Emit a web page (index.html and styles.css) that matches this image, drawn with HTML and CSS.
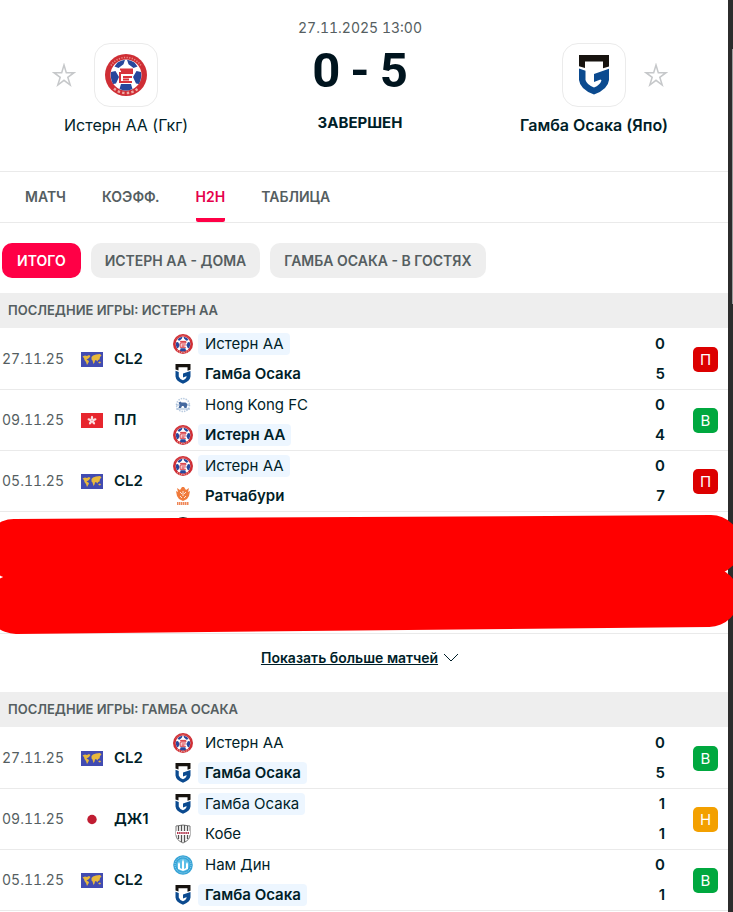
FILE: index.html
```html
<!DOCTYPE html>
<html lang="ru">
<head>
<meta charset="utf-8">
<meta name="viewport" content="width=device-width, initial-scale=1">
<title>Истерн АА - Гамба Осака</title>
<link rel="stylesheet" href="styles.css">
</head>
<body>
<svg class="sprite" aria-hidden="true">
  <symbol id="eastern" viewBox="0 0 42 42">
    <circle cx="21" cy="21" r="21" fill="#cf2e35"/>
    <path fill="none" stroke="#f3b9ae" stroke-width="1.600" stroke-dasharray="1.200 1.400" opacity=".7" d="M6 11.500A18 18 0 0 1 36 11.500"/>
    <path fill="none" stroke="#f6c9c0" stroke-width="2.400" stroke-dasharray="2.400 2.200" opacity=".8" d="M9 34.500A18 18 0 0 0 33 34.500"/>
    <circle cx="21" cy="21" r="15.500" fill="#fff"/>
    <path fill="#27479c" d="M12.500 8.600Q16 6.200 20 5.700l-1.500 4.500-5 3.800-4-1.500zM29.500 8.600Q26 6.200 22 5.700l1.500 4.500 5 3.800 4-1.500zM6 18l4.500-1 3.500 6-3 6.500-3 .5Q5 24 6 18zM36 18l-4.500-1-3.500 6 3 6.500 3 .5Q37 24 36 18zM16 30h10l1.500 5q-6.500 3-13 0z"/>
    <path fill="none" stroke="#d8343c" stroke-width="2" d="M15 15.500h12v3.500H15v9h12M18 23h9M18 25.500h6M16 17h10"/>
  </symbol>
  <symbol id="gamba" viewBox="0 0 30 40">
    <path fill="#17130f" d="M0 0h30v11.500l-6 1.800V6.500H6V13L0 11.200z"/>
    <path fill="#0b4a8f" d="M0 13.500l6.500 2.300V25q1.500 5 8.500 7.500 6-2.500 7.500-7l-1-1-6.500 2.500v-8L30 13.800V25q-1 9.500-15 14.500Q1 34.500 0 25z"/>
  </symbol>
  <symbol id="hkfc" viewBox="0 0 20 20">
    <circle cx="10" cy="10" r="6.500" fill="none" stroke="#b9cbe0" stroke-width="1.500" stroke-dasharray="1.500 1"/>
    <path fill="#46699f" d="M5.500 7.500l2-1 1 1h4l2 1.500-1 4h-2l-1-2H9l-1 2H5.500l1-3z"/>
    <path stroke="#9db6d3" d="M3 14h14M3 10h3M14 10h3"/>
  </symbol>
  <symbol id="ratchaburi" viewBox="0 0 20 20">
    <path fill="#f07b3c" d="M4 2l3 2 2-3h2l2 3 3-2-1 4 2-1-1 5-2 3-4 2-4-2-2-3-1-5 2 1z"/>
    <path fill="none" stroke="#fff" stroke-width=".800" d="M7 6l2 2M13 6l-2 2M10 5v5M7 10l2 2M13 10l-2 2"/>
    <path stroke="#ef8757" stroke-width="3" stroke-dasharray="1.500 .5" d="M4 17.500h12"/>
  </symbol>
  <symbol id="kobe" viewBox="0 0 20 20">
    <path fill="#fff" stroke="#777" d="M3 2q7-2 14 0v9q0 5-7 8-7-3-7-8z"/>
    <path stroke="#555" stroke-width="1.300" d="M5.500 2v13M8.500 1v17M11.500 1v17M14.500 2v13"/>
    <path fill="#fff" d="M3 7h14v4H3z"/>
    <path stroke="#b43b52" stroke-width="2" stroke-dasharray="1.500 .6" d="M4 9h12"/>
  </symbol>
  <symbol id="namdinh" viewBox="0 0 20 20">
    <circle cx="10" cy="10" r="9.800" fill="#35a3d6"/>
    <circle cx="10" cy="10" r="8" fill="none" stroke="#a8dbf1" stroke-dasharray="1 1"/>
    <circle cx="10" cy="10" r="6.500" fill="#5cbfe8"/>
    <path fill="#fff" d="M5 14V9l1-2 1 2v4l2 1V7l1-3 1 3v7l2-1V9l1-2 1 2v5l-5 2z"/>
  </symbol>
  <symbol id="blackcrest" viewBox="0 0 20 20"><circle cx="10" cy="10" r="10" fill="#222"/></symbol>
  <symbol id="world" viewBox="0 0 22 15">
    <path fill="#414bb2" d="M0 0h22v15H0z"/>
    <path fill="#e8b93c" d="M1.500 4.500L4 3.500l2 .5 2-1 1.500 1L8 6 6.500 7l-1 .5L8 9l-.5 1.500L6 13l-1-3-1.500-2L3 6zM10.500 5L12 3.500 15 2.500l4-.5 1.500 1.500-1.500 1.500-.5 2.500L17 8l-.5 1.500L15 8l-1 .5-.5 2-1 1.500-1-3.500-1-1zM17.500 10l1.500-.5 1 1-1 1-1.500-.5z"/>
  </symbol>
  <symbol id="hongkong" viewBox="0 0 22 15">
    <path fill="#e7262e" d="M0 0h22v15H0z"/>
    <g fill="#fff" opacity=".85">
      <ellipse cx="11" cy="5" rx="1.200" ry="2.200"/>
      <ellipse cx="11" cy="5" rx="1.200" ry="2.200" transform="rotate(72 11 7.500)"/>
      <ellipse cx="11" cy="5" rx="1.200" ry="2.200" transform="rotate(144 11 7.500)"/>
      <ellipse cx="11" cy="5" rx="1.200" ry="2.200" transform="rotate(216 11 7.500)"/>
      <ellipse cx="11" cy="5" rx="1.200" ry="2.200" transform="rotate(288 11 7.500)"/>
    </g>
  </symbol>
  <symbol id="japan" viewBox="0 0 22 15">
    <path fill="#fff" d="M0 0h22v15H0z"/>
    <circle cx="11" cy="7.500" r="4.700" fill="#c01d32"/>
  </symbol>
  <symbol id="star" viewBox="0 0 24 24">
    <path fill="none" stroke="#c6c8ca" stroke-width="1.500" d="M12 2l2.300 7.700h7.700l-6.200 4.600 2.400 7.700-6.200-4.700-6.200 4.700 2.400-7.700L2 9.700h7.700z"/>
  </symbol>
</svg>

<div class="window">
<main class="page">
  <header class="match">
    <div class="side">
      <div class="side-top">
        <button class="star" aria-label="В избранное"><svg><use href="#star"/></svg></button>
        <div class="logo"><svg class="logo-round"><use href="#eastern"/></svg></div>
      </div>
      <a class="side-name" href="#">Истерн АА (Гкг)</a>
    </div>
    <div class="summary">
      <time class="start">27.11.2025 13:00</time>
      <div class="result"><span>0</span><span>-</span><span>5</span></div>
      <div class="status">ЗАВЕРШЕН</div>
    </div>
    <div class="side">
      <div class="side-top">
        <div class="logo logo-away"><svg class="logo-shield"><use href="#gamba"/></svg></div>
        <button class="star star-away" aria-label="В избранное"><svg><use href="#star"/></svg></button>
      </div>
      <a class="side-name winner" href="#">Гамба Осака (Япо)</a>
    </div>
  </header>

  <nav class="tabs">
    <a href="#">МАТЧ</a>
    <a href="#">КОЭФФ.</a>
    <a href="#" class="current">H2H</a>
    <a href="#">ТАБЛИЦА</a>
  </nav>

  <div class="filters">
    <button class="chip chip-on">ИТОГО</button>
    <button class="chip">ИСТЕРН АА - ДОМА</button>
    <button class="chip">ГАМБА ОСАКА - В ГОСТЯХ</button>
  </div>

  <section>
    <h2 class="section-title">ПОСЛЕДНИЕ ИГРЫ: ИСТЕРН АА</h2>
    <table class="games">
      <tr>
        <td class="date">27.11.25</td>
        <td class="flag"><svg><use href="#world"/></svg></td>
        <td class="league">CL2</td>
        <td class="teams">
          <div class="team"><svg><use href="#eastern"/></svg><span class="own">Истерн АА</span></div>
          <div class="team"><svg><use href="#gamba"/></svg><span class="won">Гамба Осака</span></div>
        </td>
        <td class="goals"><div>0</div><div>5</div></td>
        <td class="outcome"><span class="badge loss">П</span></td>
      </tr>
      <tr>
        <td class="date">09.11.25</td>
        <td class="flag"><svg><use href="#hongkong"/></svg></td>
        <td class="league">ПЛ</td>
        <td class="teams">
          <div class="team"><svg><use href="#hkfc"/></svg><span>Hong Kong FC</span></div>
          <div class="team"><svg><use href="#eastern"/></svg><span class="own won">Истерн АА</span></div>
        </td>
        <td class="goals"><div>0</div><div>4</div></td>
        <td class="outcome"><span class="badge win">В</span></td>
      </tr>
      <tr>
        <td class="date">05.11.25</td>
        <td class="flag"><svg><use href="#world"/></svg></td>
        <td class="league">CL2</td>
        <td class="teams">
          <div class="team"><svg><use href="#eastern"/></svg><span class="own">Истерн АА</span></div>
          <div class="team"><svg><use href="#ratchaburi"/></svg><span class="won">Ратчабури</span></div>
        </td>
        <td class="goals"><div>0</div><div>7</div></td>
        <td class="outcome"><span class="badge loss">П</span></td>
      </tr>
    </table>
    <div class="covered">
      <div class="covered-row"><svg><use href="#blackcrest"/></svg></div>
      <div class="covered-row"></div>
      <svg class="marker" viewBox="0 0 733 122" preserveAspectRatio="none" aria-hidden="true">
        <path d="M14 37L711 33M16 92L709 85"/>
      </svg>
    </div>
    <div class="more">
      <a href="#">Показать больше матчей</a>
      <svg viewBox="0 0 16 10"><path d="M1 1l7 7 7-7"/></svg>
    </div>
  </section>

  <section>
    <h2 class="section-title">ПОСЛЕДНИЕ ИГРЫ: ГАМБА ОСАКА</h2>
    <table class="games">
      <tr>
        <td class="date">27.11.25</td>
        <td class="flag"><svg><use href="#world"/></svg></td>
        <td class="league">CL2</td>
        <td class="teams">
          <div class="team"><svg><use href="#eastern"/></svg><span>Истерн АА</span></div>
          <div class="team"><svg><use href="#gamba"/></svg><span class="own won">Гамба Осака</span></div>
        </td>
        <td class="goals"><div>0</div><div>5</div></td>
        <td class="outcome"><span class="badge win">В</span></td>
      </tr>
      <tr>
        <td class="date">09.11.25</td>
        <td class="flag"><svg><use href="#japan"/></svg></td>
        <td class="league">ДЖ1</td>
        <td class="teams">
          <div class="team"><svg><use href="#gamba"/></svg><span class="own">Гамба Осака</span></div>
          <div class="team"><svg><use href="#kobe"/></svg><span>Кобе</span></div>
        </td>
        <td class="goals"><div>1</div><div>1</div></td>
        <td class="outcome"><span class="badge draw">Н</span></td>
      </tr>
      <tr>
        <td class="date">05.11.25</td>
        <td class="flag"><svg><use href="#world"/></svg></td>
        <td class="league">CL2</td>
        <td class="teams">
          <div class="team"><svg><use href="#namdinh"/></svg><span>Нам Дин</span></div>
          <div class="team"><svg><use href="#gamba"/></svg><span class="own won">Гамба Осака</span></div>
        </td>
        <td class="goals"><div>0</div><div>1</div></td>
        <td class="outcome"><span class="badge win">В</span></td>
      </tr>
    </table>
  </section>
</main>
<div class="scroll-track"><div class="scroll-thumb"></div></div>
</div>
</body>
</html>
```
FILE: styles.css
```css
* { box-sizing: border-box; }

body {
  margin: 0;
  background: #fff;
  color: #001e28;
  font: 15px/20px Inter, "Liberation Sans", sans-serif;
}

a { color: inherit; text-decoration: none; }
button { border: 0; padding: 0; background: none; font: inherit; color: inherit; }
svg { display: block; }
.sprite { position: absolute; width: 0; height: 0; }

.window {
  display: grid;
  grid-template-columns: minmax(0, 1fr) 5px;
  min-height: 100vh;
  overflow: hidden;
}

.scroll-track { background: #2c2c2c; padding: 49px 0 0 4px; }
.scroll-thumb { height: 255px; background: #9a9a9a; }

/* Match header */
.match {
  display: grid;
  grid-template-columns: 35fr 30fr 35fr;
  padding: 18px 8px 36px 0;
  border-bottom: 1px solid #eaeaea;
}

.side { display: flex; flex-direction: column; align-items: center; padding-top: 25px; }
.side-top {
  display: grid;
  grid-template-columns: 24px 64px 24px;
  gap: 18px;
  align-items: center;
}
.star svg { width: 24px; height: 24px; }
.logo {
  display: grid;
  place-items: center;
  height: 64px;
  border: 1px solid #ebebeb;
  border-radius: 16px;
}
.logo-away { grid-column: 2; }
.logo-round { width: 42px; height: 42px; }
.logo-shield { width: 30px; height: 40px; }
.side-name { margin-top: 8px; font-size: 16px; }
.winner { font-weight: 600; }

.summary { display: flex; flex-direction: column; align-items: center; }
.start { color: #555e61; font-size: 14px; font-variant-numeric: tabular-nums; }
.result {
  display: flex;
  gap: 10px;
  margin-top: 8px;
  color: #00141e;
  font: 700 49px/50px Roboto, Inter, sans-serif;
}
.status { margin-top: 17px; font-weight: 700; }

/* Tabs */
.tabs {
  display: flex;
  gap: 36px;
  padding: 0 25px;
  border-bottom: 1px solid #eaeaea;
  color: #555e61;
  font-size: 14px;
  font-weight: 600;
}
.tabs a { height: 50px; line-height: 50px; }
.tabs .current {
  color: #e5004b;
  background: linear-gradient(#ff0046, #ff0046) bottom / 100% 4px no-repeat;
  border-radius: 2px;
}

.filters { display: flex; gap: 10px; padding: 20px 2px 15px; }
.chip {
  height: 35px;
  padding: 0 14px;
  border-radius: 10px;
  background: #eee;
  color: #555e61;
  font-size: 14px;
  font-weight: 600;
}
.chip-on { padding: 0 15px; background: #ff0046; color: #fff; }

/* Game lists */
.section-title {
  margin: 0 0 1px;
  padding: 0 8px;
  background: #eee;
  color: #555e61;
  font-size: 13px;
  font-weight: 600;
  line-height: 35px;
}

.games { width: 100%; table-layout: fixed; border-collapse: separate; border-spacing: 0; }
.games td { padding: 0; border-bottom: 1px solid #eaeaea; vertical-align: middle; }
.games .date {
  width: 81px;
  padding-left: 2px;
  color: #555e61;
  font-size: 14px;
  font-variant-numeric: tabular-nums;
}
.games .flag { width: 33px; }
.flag svg { width: 22px; height: 15px; }
.games .league { width: 59px; font-weight: 600; }
.games .goals { width: 40px; font-weight: 600; text-align: right; line-height: 30px; }
.games .outcome { width: 63px; padding: 0 10px 0 28px; }

.team { display: flex; align-items: center; gap: 5px; height: 30px; }
.team svg { width: 20px; height: 20px; }
.team span { padding: 0 6px 0 7px; border-radius: 4px; line-height: 22px; }
.team .own { background: #edf6ff; }
.team .won { font-weight: 600; }

.badge {
  display: block;
  height: 25px;
  border-radius: 5px;
  color: #fff;
  line-height: 25px;
  text-align: center;
}
.loss { background: #dc0000; }
.win { background: #00a83f; }
.draw { background: #f3a000; }

/* Games crossed out with a marker */
.covered { position: relative; }
.covered-row { height: 61px; padding: 5px 173px; border-bottom: 1px solid #eaeaea; }
.covered-row svg { width: 20px; height: 20px; }
.marker { position: absolute; top: 0; left: 0; width: calc(100% + 5px); height: 122px; }
.marker path { fill: none; stroke: #f00; stroke-width: 60px; stroke-linecap: round; }

.more {
  display: flex;
  align-items: center;
  justify-content: center;
  gap: 5px;
  height: 58px;
  padding: 0 8px 10px 0;
  font-size: 14px;
  font-weight: 600;
}
.more a { text-decoration: underline; }
.more svg { width: 16px; height: 10px; }
.more path { fill: none; stroke: #001e28; stroke-width: 1px; }
```
